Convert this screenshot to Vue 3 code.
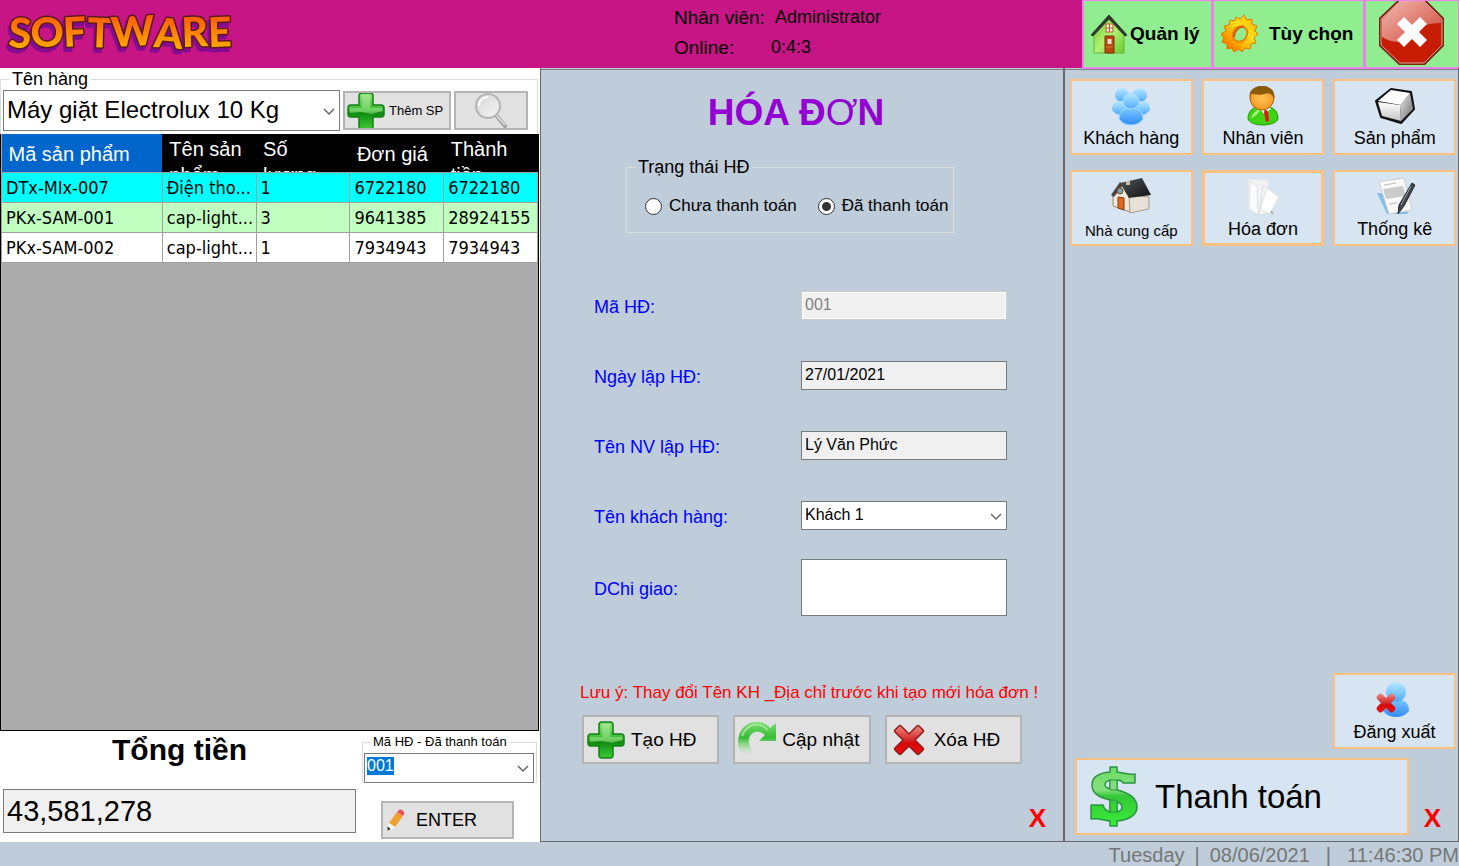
<script setup>
import { ref, onMounted } from 'vue'

const products = ref(['Máy giặt Electrolux 10 Kg'])
const customers = ref(['Khách 1'])
const status = ref('paid')
const invoiceCode = ref('001')
const address = ref('')
const invoiceInput = ref(null)

const rows = [
  { code: 'DTx-MIx-007', name: 'Điện tho...', qty: '1', price: '6722180', total: '6722180', tone: 'selected' },
  { code: 'PKx-SAM-001', name: 'cap-light...', qty: '3', price: '9641385', total: '28924155', tone: 'alternate' },
  { code: 'PKx-SAM-002', name: 'cap-light...', qty: '1', price: '7934943', total: '7934943', tone: '' },
]

onMounted(() => {
  invoiceInput.value.focus()
  invoiceInput.value.select()
})
</script>

<template>
  <div class="app">
    <svg class="defs" width="0" height="0" aria-hidden="true">
      <defs>
        <linearGradient id="gLogo" x1="0" y1="0" x2="0" y2="1"><stop offset="0.2" stop-color="#ff5a08" /><stop offset="0.8" stop-color="#ffa800" /></linearGradient>
        <linearGradient id="gGreen" x1="0" y1="0" x2="0" y2="1"><stop offset="0" stop-color="#8fe37c" /><stop offset="0.5" stop-color="#35b52c" /><stop offset="0.55" stop-color="#0d8a10" /><stop offset="1" stop-color="#3fcb33" /></linearGradient>
        <linearGradient id="gRed" x1="0" y1="0" x2="0" y2="1"><stop offset="0" stop-color="#e88a82" /><stop offset="0.5" stop-color="#d6282a" /><stop offset="0.6" stop-color="#d80a0a" /><stop offset="1" stop-color="#ee1111" /></linearGradient>
        <linearGradient id="gBlue" x1="0" y1="0" x2="0" y2="1"><stop offset="0" stop-color="#b9e9ff" /><stop offset="0.5" stop-color="#83cbff" /><stop offset="1" stop-color="#4fa8ff" /></linearGradient>
        <linearGradient id="gBlueFront" x1="0" y1="0" x2="0" y2="1"><stop offset="0" stop-color="#7cc8ff" /><stop offset="1" stop-color="#2f8cf8" /></linearGradient>
        <linearGradient id="gGear" x1="1" y1="0" x2="0" y2="1"><stop offset="0" stop-color="#ffb000" /><stop offset="0.4" stop-color="#ffdf1a" /><stop offset="0.7" stop-color="#ff9d00" /><stop offset="1" stop-color="#f04a00" /></linearGradient>
        <linearGradient id="gWall" x1="0" y1="0" x2="1" y2="1"><stop offset="0" stop-color="#6cc22c" /><stop offset="0.5" stop-color="#b2f274" /><stop offset="1" stop-color="#67cf2e" /></linearGradient>
        <linearGradient id="gGloss" x1="0" y1="0" x2="1" y2="1"><stop offset="0" stop-color="#f6d6d2" /><stop offset="1" stop-color="#d5503e" /></linearGradient>
        <linearGradient id="gArrow" x1="0" y1="0" x2="0" y2="1"><stop offset="0" stop-color="#7fdc71" /><stop offset="0.45" stop-color="#35bd35" /><stop offset="0.6" stop-color="#7ed579" /><stop offset="1" stop-color="#e1e1e1" stop-opacity="0" /></linearGradient>
        <linearGradient id="gDollar" x1="0" y1="0" x2="0" y2="60" gradientUnits="userSpaceOnUse"><stop offset="0" stop-color="#68dc62" /><stop offset="0.4" stop-color="#86e080" /><stop offset="0.5" stop-color="#36c736" /><stop offset="1" stop-color="#37ef38" /></linearGradient>
        <linearGradient id="gLens" x1="0" y1="0" x2="1" y2="1"><stop offset="0" stop-color="#d6d6d6" /><stop offset="1" stop-color="#f5f5f5" /></linearGradient>
        <linearGradient id="gFront" x1="0" y1="0" x2="0" y2="1"><stop offset="0" stop-color="#fff" /><stop offset="1" stop-color="#c4c4c4" /></linearGradient>
        <linearGradient id="gCube" x1="0" y1="0" x2="1" y2="1"><stop offset="0" stop-color="#e8e8e8" /><stop offset="1" stop-color="#6c6c6c" /></linearGradient>
        <linearGradient id="gRoof" x1="0" y1="0" x2="1" y2="1"><stop offset="0" stop-color="#55595c" /><stop offset="1" stop-color="#0d0e10" /></linearGradient>
        <radialGradient id="gFace"><stop offset="0" stop-color="#ffc35a" /><stop offset="1" stop-color="#f79a1f" /></radialGradient>
        <symbol id="plus" viewBox="0 0 38 38">
          <path d="M15 1h8q3 0 3 3v9h8q3 0 3 3v6q0 3-3 3h-8v9q0 3-3 3h-8q-3 0-3-3v-9H4q-3 0-3-3v-6q0-3 3-3h8V4q0-3 3-3z" fill="url(#gGreen)" stroke="#128016" stroke-width="1.5" />
          <path d="M15 3h8v13h12v3l-10 3-11-2-11 1v-5h12z" fill="#c4f5b5" opacity="0.4" />
        </symbol>
      </defs>
    </svg>

    <header class="top">
      <div class="brand">
        <svg width="240" height="56" viewBox="0 0 240 56" role="img" aria-label="SOFTWARE">
          <text class="logo" x="8" y="39" rotate="3 0 -3 2 -3 4 -2 -2">SOFTWARE</text>
        </svg>
      </div>
      <dl class="session">
        <dt>Nhân viên:</dt><dd>Administrator</dd>
        <dt>Online:</dt><dd class="near">0:4:3</dd>
      </dl>
      <nav class="top-nav">
        <button type="button" class="nav-manage">
          <svg width="36" height="40" viewBox="0 0 36 40">
            <path d="M3 19 18 4l15 15v20H3z" fill="url(#gWall)" stroke="#6fae44" />
            <path d="M0 21 18 1l18 20-2 1L18 5 2 22z" fill="#2e3a2c" stroke="#2e3a2c" />
            <path d="M15 10h7v8h-7z" fill="#fbe9d8" stroke="#b2632d" /><path d="M18.500 10v8M15 14h7" stroke="#b2632d" />
            <path d="M14 22h9v17h-9z" fill="#ba4a12" stroke="#7d2e08" /><path d="M16.500 25h4v5h-4z" fill="#eedfd0" /><path d="M15 33h7" stroke="#d87b41" />
          </svg>
          <span>Quản lý</span>
        </button>
        <button type="button" class="nav-options">
          <svg width="40" height="40" viewBox="0 0 40 40">
            <path d="M17 3l4 2 4-4 3 5 5-1v5l5 2-2 5 3 3-4 4 2 5-5 1-1 5-5-1-3 4-3-3-5 3-2-4-5 1v-5l-5-2 2-4-3-4 5-3-2-5 5-1 1-5 5 1z" fill="url(#gGear)" stroke="#dc7a00" stroke-linejoin="round" />
            <ellipse cx="21" cy="20" rx="7" ry="8" transform="rotate(35 21 20)" fill="#90ee90" stroke="#ef7f00" stroke-width="2" />
            <path d="M15 23c0-6 5-11 10-10" fill="none" stroke="#d9580a" stroke-width="2" />
          </svg>
          <span>Tùy chọn</span>
        </button>
        <button type="button" class="nav-close" aria-label="Đóng">
          <svg width="68" height="66" viewBox="0 0 68 66">
            <path d="M21-2h26l19 19v28L47 64H21L1 45V17z" fill="#7c2016" />
            <path d="M22 0h24l18 18v26L46 62H22L3 44V18z" fill="#c61d04" stroke="#dda49b" />
            <path d="M22 0h24l17 18v4C47 22 34 28 27 39c-7 4-16 1-23-3V18z" fill="url(#gGloss)" opacity="0.85" />
            <path d="m26 16 8 8 8-8 7 7-8 8 8 8-7 7-8-8-8 8-7-7 8-8-8-8z" fill="#fff" />
          </svg>
        </button>
      </nav>
    </header>

    <main class="work">
      <section class="sales">
        <fieldset class="picker">
          <legend>Tên hàng</legend>
          <div class="picker-row">
            <div class="combo combo-product">
              <select aria-label="Tên hàng"><option v-for="p in products" :key="p">{{ p }}</option></select>
              <svg class="chevron" width="12" height="8" viewBox="0 0 12 8"><path d="m1 1 5 5 5-5" /></svg>
            </div>
            <button type="button" class="plain add">
              <svg width="38" height="38"><use href="#plus" /></svg>
              <span>Thêm SP</span>
            </button>
            <button type="button" class="plain search" aria-label="Tìm kiếm">
              <svg width="36" height="36" viewBox="0 0 36 36">
                <path d="m23 22 9 11" stroke="#9c9c9c" stroke-width="4" stroke-linecap="round" /><path d="m23 22 9 10" stroke="#d7d7d7" stroke-width="2" />
                <circle cx="15" cy="13" r="12" fill="url(#gLens)" stroke="#b4b4b4" stroke-width="2" /><path d="M6 13c0-6 4-9 9-9" fill="none" stroke="#fff" stroke-width="2" />
              </svg>
            </button>
          </div>
        </fieldset>

        <div class="grid-box">
          <table>
            <colgroup><col class="c-code"><col class="c"><col class="c"><col class="c"><col class="c"></colgroup>
            <thead>
              <tr>
                <th class="active"><div class="one">Mã sản phẩm</div></th>
                <th><div>Tên sản phẩm</div></th>
                <th><div>Số lượng</div></th>
                <th><div class="one">Đơn giá</div></th>
                <th><div>Thành tiền</div></th>
              </tr>
            </thead>
            <tbody>
              <tr v-for="r in rows" :key="r.code" :class="r.tone">
                <td>{{ r.code }}</td><td>{{ r.name }}</td><td>{{ r.qty }}</td><td>{{ r.price }}</td><td>{{ r.total }}</td>
              </tr>
            </tbody>
          </table>
        </div>

        <div class="summary">
          <div class="sum-left">
            <label for="total">Tổng tiền</label>
            <input id="total" type="text" value="43,581,278" readonly>
          </div>
          <div class="sum-right">
            <fieldset class="paid">
              <legend>Mã HĐ - Đã thanh toán</legend>
              <div class="combo">
                <input ref="invoiceInput" v-model="invoiceCode" type="text" aria-label="Mã HĐ - Đã thanh toán">
                <svg class="chevron" width="12" height="8" viewBox="0 0 12 8"><path d="m1 1 5 5 5-5" /></svg>
              </div>
            </fieldset>
            <button type="button" class="plain enter">
              <svg width="18" height="22" viewBox="0 0 18 22">
                <path d="m2 14 8-11 6 4-8 11z" fill="#efa02c" /><path d="m10 3 2-2q1-1 3 0l2 2q1 1 0 2l-1 2z" fill="#e4525e" /><path d="m2 14 6 4-6 3q-1 0-1-1z" fill="#fff" /><path d="m1 18 2 2-2 1z" fill="#333" stroke="#333" />
              </svg>
              <span>ENTER</span>
            </button>
          </div>
        </div>
      </section>

      <section class="invoice">
        <div class="sheet">
          <h1>HÓA Đ<span>Ơ</span>N</h1>
          <fieldset class="status">
            <legend>Trạng thái HĐ</legend>
            <div class="status-row">
              <label><input v-model="status" type="radio" name="status" value="unpaid">Chưa thanh toán</label>
              <label><input v-model="status" type="radio" name="status" value="paid">Đã thanh toán</label>
            </div>
          </fieldset>

          <form class="fields" @submit.prevent>
            <div class="field"><label for="code">Mã HĐ:</label><input id="code" type="text" value="001" disabled></div>
            <div class="field"><label for="date">Ngày lập HĐ:</label><input id="date" type="text" value="27/01/2021" readonly></div>
            <div class="field"><label for="staff">Tên NV lập HĐ:</label><input id="staff" type="text" value="Lý Văn Phức" readonly></div>
            <div class="field">
              <label for="customer">Tên khách hàng:</label>
              <div class="combo">
                <select id="customer"><option v-for="c in customers" :key="c">{{ c }}</option></select>
                <svg class="chevron" width="12" height="8" viewBox="0 0 12 8"><path d="m1 1 5 5 5-5" /></svg>
              </div>
            </div>
            <div class="field tall"><label for="address">DChi giao:</label><textarea id="address" v-model="address"></textarea></div>
          </form>

          <p class="notice">Lưu ý: Thay đổi Tên KH _Địa chỉ trước khi tạo mới hóa đơn !</p>
          <div class="actions">
            <button type="button" class="plain">
              <svg width="38" height="38"><use href="#plus" /></svg><span>Tạo HĐ</span>
            </button>
            <button type="button" class="plain">
              <svg width="38" height="38" viewBox="0 0 38 38">
                <path d="M0 22C0 8 9 1 18 1c7 0 11 2 14 6l6-5v18H21l6-6c-3-3-7-4-10-3-6 2-9 9-3 18l1 7C5 35 0 30 0 22z" fill="url(#gArrow)" />
                <path d="M4 15C8 5 17 1 25 5l5 4" fill="none" stroke="#b6edae" stroke-width="2" opacity="0.7" />
              </svg>
              <span>Cập nhật</span>
            </button>
            <button type="button" class="plain">
              <svg width="38" height="38" viewBox="0 0 38 38">
                <path d="m11 5 8 8 8-8q1-1 2 0l4 4q1 1 0 2l-8 8 8 8q1 1 0 2l-4 4q-1 1-2 0l-8-8-8 8q-1 1-2 0l-4-4q-1-1 0-2l8-8-8-8q-1-1 0-2l4-4q1-1 2 0z" fill="url(#gRed)" stroke="#8e1a1a" stroke-width="1.500" />
              </svg>
              <span>Xóa HĐ</span>
            </button>
          </div>
        </div>
        <button type="button" class="dismiss">X</button>
      </section>

      <section class="menu">
        <div class="tiles">
          <button type="button" class="tile">
            <svg width="40" height="40" viewBox="0 0 40 40">
              <circle cx="11" cy="9" r="7" fill="url(#gBlue)" /><circle cx="29" cy="9" r="7" fill="url(#gBlue)" />
              <path d="M1 24c0-6 3-9 9-9s9 3 9 9q-4 5-9 5t-9-5zM21 24c0-6 3-9 9-9s9 3 9 9q-4 5-9 5t-9-5z" fill="url(#gBlue)" />
              <path d="M8 33c0-8 5-11 12-11s12 3 12 11q-4 6-12 6T8 33z" fill="url(#gBlueFront)" stroke="#a6d8ff" /><circle cx="20" cy="15" r="8" fill="url(#gBlue)" stroke="#a6d8ff" />
            </svg>
            <span>Khách hàng</span>
          </button>
          <button type="button" class="tile">
            <svg width="40" height="40" viewBox="0 0 40 40">
              <path d="M5 33c0-9 6-13 15-13s15 4 15 13c-3 8-27 8-30 0z" fill="#3fd313" stroke="#249a0c" /><path d="M8 32q3-8 10-9-4 7-10 9z" fill="#a5f278" />
              <path d="m16 22 5 6 7-5-2-3H17z" fill="#f0f4ee" /><path d="m22 23 3 3 1 9-3 1-2-10z" fill="#e01414" />
              <circle cx="19" cy="12" r="12" fill="url(#gFace)" stroke="#a86311" /><path d="M7 12C5 5 11 0 19 0s14 5 12 13c-1-4-3-5-7-6-4 3-12 1-16 1z" fill="#8a5b0b" />
            </svg>
            <span>Nhân viên</span>
          </button>
          <button type="button" class="tile">
            <svg width="40" height="40" viewBox="0 0 40 40">
              <path d="m16 3 20 3 3 17-13 14-20-6L1 15z" fill="#111" stroke="#111" stroke-width="2" stroke-linejoin="round" /><path d="m16 4 19 3-9 12-23-4z" fill="#fff" /><path d="m3 16 22 3 1 16-19-5z" fill="url(#gFront)" /><path d="m25 19 10-12 3 16-12 12z" fill="url(#gCube)" />
            </svg>
            <span>Sản phẩm</span>
          </button>
          <button type="button" class="tile small">
            <svg width="40" height="40" viewBox="0 0 40 40">
              <path d="m2 18 8-12 9 12v17L2 29z" fill="#efe7d8" stroke="#9b8b73" /><path d="m18 18 20 2v12l-19 4z" fill="#e7e0d6" stroke="#a79b88" />
              <path d="M9 6 31 1l9 17-22 3z" fill="url(#gRoof)" /><path d="M0 18 9 5l3 3-9 12z" fill="#4a443f" />
              <path d="m7 20 6 1v12l-6-2z" fill="#df6923" stroke="#7e3a15" /><circle cx="9" cy="14" r="3" fill="#7ea2b6" stroke="#7b4520" /><path d="M15 4h4v4h-4z" fill="#c9bba9" />
            </svg>
            <span>Nhà cung cấp</span>
          </button>
          <button type="button" class="tile focused">
            <svg width="40" height="40" viewBox="0 0 40 40">
              <path d="m5 2 20 1 2 28-12 7-10-5z" fill="#f2f2f2" stroke="#e0e3e6" /><path d="m7 4 7 5 1 28-9-5z" fill="#fafafa" stroke="#dfe2e5" />
              <path d="m20 9 9 4-3 23-10 2z" fill="#f7f7f7" stroke="#dcdfe3" /><path d="m24 11 12 9-9 17-10-5z" fill="#fff" stroke="#dde0e4" /><path d="m28 34 2 3" stroke="#aaa" stroke-width="2" />
            </svg>
            <span>Hóa đơn</span>
          </button>
          <button type="button" class="tile">
            <svg width="40" height="40" viewBox="0 0 40 40">
              <path d="m2 16 26 1 5 20H12z" fill="#83bfe6" /><path d="m4 5 25-4 8 32-23 4z" fill="#fafafa" stroke="#ccd0d3" />
              <path d="m9 8 12-2" stroke="#bbb" /><path d="m8 12 20-3 3 10-20 3z" fill="#c9cbcd" /><path d="m14 27 8-1" stroke="#bbb" />
              <path d="m37 6 3 2-11 21-6 8 1-9z" fill="#41454a" stroke="#292c30" /><path d="M36 9 26 28" stroke="#9ba2a9" />
            </svg>
            <span>Thống kê</span>
          </button>
        </div>
        <div class="menu-bottom">
          <button type="button" class="tile logout">
            <svg width="40" height="40" viewBox="0 0 40 40">
              <path d="M8 31c0-9 5-12 13-12s13 4 13 12q-5 6-13 6T8 31z" fill="url(#gBlueFront)" /><circle cx="21" cy="12" r="10" fill="url(#gBlue)" />
              <path d="m7 14 4 4 4-4q2-1 3 0l2 2q1 2 0 3l-4 4 4 4q1 2 0 3l-2 2q-2 1-3 0l-4-4-4 4q-2 1-3 0l-2-2q-1-1 0-3l4-4-4-4q-1-2 0-3l2-2q2-1 3 0z" fill="url(#gRed)" />
            </svg>
            <span>Đăng xuất</span>
          </button>
          <div class="pay-row">
            <button type="button" class="pay">
              <svg width="50" height="62" viewBox="0 0 50 62">
                <path d="M21 1h7v5c8 1 12 3 18 2v9H34c-1-2-3-3-6-3v10c13 3 20 8 20 17 0 8-8 13-20 14v5h-7v-5c-7-1-12-3-19-2V39h12c1 4 3 6 7 7V34C9 31 3 27 3 19 3 12 9 7 21 6zM21 14c-4 1-5 3-5 5s2 3 5 4zM28 36v10c4-1 5-3 5-5s-2-4-5-5z" fill="url(#gDollar)" fill-rule="evenodd" stroke="#2b9442" stroke-width="1.500" stroke-linejoin="round" />
                <path d="M21 14h7v10h-7zM21 34h7v12h-7z" fill="url(#gDollar)" stroke="#2b9442" />
              </svg>
              <span>Thanh toán</span>
            </button>
            <button type="button" class="dismiss">X</button>
          </div>
        </div>
      </section>
    </main>

    <footer class="clock">
      <span>Tuesday</span><span>|</span><span>08/06/2021</span><span class="wide">|</span><span>11:46:30 PM</span>
    </footer>
  </div>
</template>

<style>
body { margin: 0; background: #bfcdda; }
</style>

<style scoped>
.app, .app button, .app input, .app select, .app textarea { font-family: "Liberation Sans", Arial, sans-serif; }
.app { box-sizing: border-box; display: flex; flex-direction: column; min-height: 100vh; background: #bfcdda; color: #000; font-size: 18px; }
.app * { box-sizing: border-box; }
.defs { position: absolute; }
svg { flex: none; display: block; }
button { cursor: pointer; color: #000; padding: 0; margin: 0; }
fieldset { margin: 0; padding: 0; min-width: 0; border: 1px solid #dcdcdc; }

.top { display: grid; grid-template-columns: 540fr 542fr 377fr; height: 68px; background: #c71585; }
.brand { padding-top: 8px; min-width: 0; }
.logo { font-family: Lato, sans-serif; font-weight: 900; font-size: 41px; stroke-linejoin: round; paint-order: stroke; fill: url(#gLogo); stroke: #5c1820; stroke-width: 3px; filter: drop-shadow(-2px 4px 0 #850b91); }
.session { margin: 0; padding: 3px 0 0 134px; display: grid; grid-template-columns: 97px 1fr; grid-auto-rows: 30px; line-height: 28px; border-bottom: 1px solid #808080; }
.session dt { font-size: 19px; line-height: 30px; }
.session dd { margin: 0 0 0 4px; }
.session .near { margin: 0; }
.top-nav { display: grid; grid-template-columns: 130fr 152fr 95fr; border-bottom: 1px solid #808080; }
.top-nav button { display: flex; align-items: center; overflow: hidden; min-width: 0; background: #90ee90; border: 1px solid #ee82ee; border-width: 1px 1px 2px 2px; font-size: 19px; font-weight: 700; white-space: nowrap; }
.top-nav .nav-manage { gap: 3px; padding-left: 7px; }
.top-nav .nav-options { gap: 10px; padding-left: 5px; }
.top-nav .nav-close { justify-content: center; }

.work { flex: 1; display: grid; grid-template-columns: 540fr 524fr 395fr; }
.sales { display: flex; flex-direction: column; background: #fff; min-width: 0; }
.picker { border-bottom: 0; margin-right: 2px; padding: 0 9px 3px 2px; }
legend { line-height: 22px; margin-left: 6px; padding: 0 3px; }
.picker-row { display: flex; gap: 3px; align-items: center; }
.plain { display: flex; align-items: center; background: #e1e1e1; border: 2px solid #b4b4b4; white-space: nowrap; overflow: hidden; }
.combo { position: relative; display: flex; min-width: 0; }
.combo select, .combo input { appearance: none; width: 100%; min-width: 0; margin: 0; background: #fff; border: 1px solid #7a7a7a; border-radius: 0; outline: none; color: #000; font-size: 16px; }
.chevron { position: absolute; right: 5px; top: 50%; margin-top: -3px; pointer-events: none; }
.chevron path { fill: none; stroke: #666; stroke-width: 1.5; }
.combo-product { flex: 1; }
.combo-product select { height: 41px; padding: 0 20px 2px 3px; font-size: 24px; }
.add { width: 108px; height: 39px; gap: 4px; padding-left: 2px; font-size: 13px; }
.search { width: 74px; height: 39px; justify-content: center; }

.grid-box { flex: 1; background: #ababab; border: 1px solid #000; border-top: 0; margin-right: 1px; }
table { width: 100%; table-layout: fixed; border-collapse: collapse; }
.c-code { width: 30%; }
.c { width: 17.5%; }
thead { background: #000; color: #fff; }
th { padding: 0; font-size: 20px; font-weight: 400; text-align: left; }
th div { height: 38px; overflow: hidden; padding: 2px 10px 0 7px; line-height: 26px; }
th .one { padding: 0 0 0 7px; line-height: 40px; white-space: nowrap; }
th.active { background: #0066cc; }
td { height: 30px; padding: 0 0 0 4px; border: 1px solid #a0a0a0; background: #fff; white-space: nowrap; font-family: "DejaVu Sans Condensed", "DejaVu Sans", sans-serif; font-size: 18px; line-height: 28px; }
.selected td { background: #00ffff; }
.alternate td { background: #c0ffc0; }

.summary { display: flex; gap: 6px; padding: 0 3px 3px 3px; height: 111px; }
.sum-left { flex: 1; display: flex; flex-direction: column; justify-content: space-between; min-width: 0; padding-bottom: 6px; }
.sum-left label { text-align: center; font-size: 30px; font-weight: 700; line-height: 38px; }
.sum-left input { width: 100%; height: 44px; padding: 0 3px; border: 1px solid #7a7a7a; background: #f0f0f0; font-size: 29px; outline: none; }
.sum-right { width: 175px; display: flex; flex-direction: column; justify-content: space-between; align-items: flex-start; }
.paid { width: 175px; border-bottom: 0; padding: 0 2px 0 1px; }
.paid legend { font-size: 13px; line-height: 22px; }
.paid .combo input { height: 30px; padding: 0 22px 4px 2px; }
.paid input::selection { background: #0078d7; color: #fff; }
.enter { width: 133px; height: 38px; margin-left: 19px; gap: 11px; padding-left: 4px; font-size: 18px; }

.invoice { display: flex; flex-direction: column; border: 1px solid #696969; border-width: 0 1px 1px 1px; min-width: 0; }
.sheet { width: 440px; margin: 0 auto; }
h1 { margin: 22px 12px 0 0; text-align: center; line-height: 46px; font-size: 37px; font-weight: 700; color: #9400d3; }
h1 span { font-weight: 400; }
.status { width: 328px; height: 77px; margin: 20px 0 0 44px; }
.status legend { margin-left: 8px; }
.status-row { display: flex; gap: 21px; padding: 15px 0 0 18px; }
.status-row label { display: flex; align-items: center; gap: 7px; line-height: 26px; font-size: 17px; white-space: nowrap; }
.status-row input { appearance: none; width: 17px; height: 17px; margin: 0; border: 1px solid #333; border-radius: 50%; background: #fff; }
.status-row input:checked { background: radial-gradient(circle, #333 0 4px, #fff 5px); }
.fields { margin: 58px 15px 0 12px; display: flex; flex-direction: column; gap: 41px; }
.field { display: grid; grid-template-columns: 207px 1fr; align-items: center; }
.field > label { color: #0000ff; line-height: 22px; padding-top: 2px; }
.field > input, .field textarea { width: 100%; height: 29px; margin: 0; padding: 0 3px 1px; border: 1px solid #7a7a7a; border-radius: 0; background: #f0f0f0; color: #000; font-size: 16px; outline: none; }
.field > input:disabled { border-color: #ccc; color: #808080; box-shadow: inset 0 0 0 1px #fff; }
.field select { height: 29px; padding: 0 20px 2px 3px; }
.field textarea { height: 57px; background: #fff; resize: none; display: block; }
.tall { margin-top: -12px; }
.notice { margin: 66px 0 11px -2px; line-height: 22px; font-size: 17px; color: #ff0000; white-space: nowrap; }
.actions { display: grid; grid-template-columns: repeat(3, 1fr); gap: 14px; }
.actions .plain { height: 49px; gap: 6px; padding-left: 3px; font-size: 19px; }
.dismiss { background: none; border: 0; color: #ff0000; font-size: 26px; font-weight: 700; line-height: 28px; }
.invoice .dismiss { margin: auto 17px 9px auto; }

.menu { display: flex; flex-direction: column; justify-content: space-between; border: solid #696969; border-width: 0 1px 1px 1px; padding: 11px 2px 6px 5px; min-width: 0; }
.tiles { display: grid; grid-template-columns: repeat(3, 1fr); gap: 15px 9px; }
.tile, .pay { background: #d7e4f2; border: 2px solid #ffc080; }
.tile { display: flex; flex-direction: column; align-items: center; height: 76px; padding-top: 5px; font-size: 18px; line-height: 24px; white-space: nowrap; min-width: 0; }
.tile.focused { border-width: 3px; padding-top: 4px; }
.tile.small { font-size: 15px; line-height: 28px; }
.menu-bottom { display: flex; flex-direction: column; gap: 9px; }
.logout { align-self: flex-end; width: 123px; }
.pay-row { display: flex; align-items: flex-end; padding-left: 5px; }
.pay { flex: 1; display: flex; align-items: center; gap: 16px; height: 77px; padding-left: 12px; font-size: 33px; white-space: nowrap; }
.pay-row .dismiss { margin: 0 15px 3px; }
.clock { display: flex; justify-content: flex-end; gap: 10px; height: 24px; line-height: 26px; font-size: 20px; color: #767676; white-space: nowrap; overflow: hidden; }
.clock .wide { margin: 0 6px; }
</style>
